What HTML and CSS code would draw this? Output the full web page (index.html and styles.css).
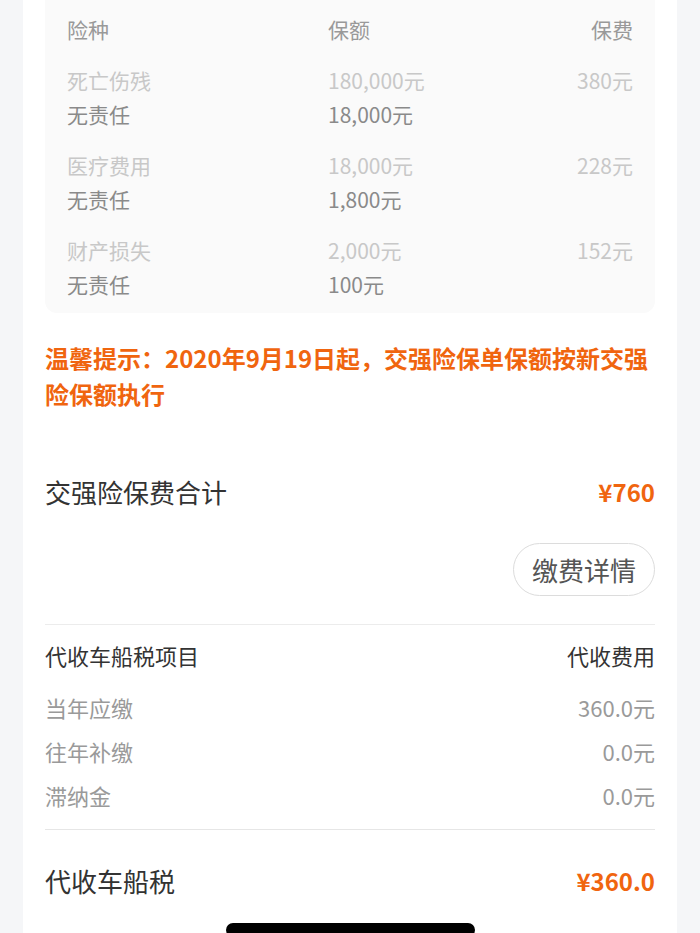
FILE: index.html
```html
<!DOCTYPE html>
<html lang="zh-CN">
<head>
<meta charset="utf-8">
<title>交强险保费</title>
<link rel="stylesheet" href="styles.css">
</head>
<body>
<div class="card">
  <div class="cover">
    <div class="cover-head">
      <span>险种</span><span>保额</span><span class="r">保费</span>
    </div>
    <div class="cover-row">
      <span class="lt">死亡伤残</span><span class="lt">180,000元</span><span class="lt r">380元</span>
      <span class="dk">无责任</span><span class="dk">18,000元</span><span></span>
    </div>
    <div class="cover-row">
      <span class="lt">医疗费用</span><span class="lt">18,000元</span><span class="lt r">228元</span>
      <span class="dk">无责任</span><span class="dk">1,800元</span><span></span>
    </div>
    <div class="cover-row">
      <span class="lt">财产损失</span><span class="lt">2,000元</span><span class="lt r">152元</span>
      <span class="dk">无责任</span><span class="dk">100元</span><span></span>
    </div>
  </div>

  <p class="notice">温馨提示：2020年9月19日起，交强险保单保额按新交强险保额执行</p>

  <div class="total">
    <span class="total-label">交强险保费合计</span>
    <span class="price">¥760</span>
  </div>

  <div class="btn-row">
    <button class="detail-btn">缴费详情</button>
  </div>

  <div class="divider first"></div>

  <div class="tax-head">
    <span>代收车船税项目</span><span>代收费用</span>
  </div>
  <div class="tax-list">
    <div class="tax-item"><span>当年应缴</span><span>360.0元</span></div>
    <div class="tax-item"><span>往年补缴</span><span>0.0元</span></div>
    <div class="tax-item"><span>滞纳金</span><span>0.0元</span></div>
  </div>

  <div class="divider"></div>

  <div class="total tax-total">
    <span class="total-label">代收车船税</span>
    <span class="price">¥360.0</span>
  </div>
</div>
<div class="home-indicator"></div>
</body>
</html>
```

FILE: styles.css
```css
* { box-sizing: border-box; }

html, body {
  margin: 0;
  padding: 0;
}

body {
  background: #f5f6f8;
  font-family: "Noto Sans CJK SC", "Noto Sans", sans-serif;
  color: #333;
  height: 933px;
  overflow: hidden;
}

.card {
  margin: 0 23px;
  background: #fff;
  padding: 0 22px 40px;
  min-height: 933px;
}

.cover {
  background: #fafafa;
  border-radius: 0 0 12px 12px;
  padding: 12px 22px 12px;
  display: flex;
  flex-direction: column;
  gap: 17px;
  font-size: 21px;
}

.cover-head,
.cover-row {
  display: grid;
  grid-template-columns: 261px 1fr auto;
  line-height: 34px;
}

.cover-head { color: #999; }

.cover .r { text-align: right; }

.cover .lt { color: #c8c8c8; }
.cover .dk { color: #8a8a8a; }

.notice {
  margin: 27px 0 0;
  color: #f0650f;
  font-weight: bold;
  font-size: 24px;
  line-height: 36px;
}

.total {
  margin-top: 60px;
  display: flex;
  justify-content: space-between;
  align-items: center;
  line-height: 40px;
}

.total-label {
  font-size: 26px;
  color: #333;
}

.price {
  font-size: 24px;
  font-weight: bold;
  color: #f0650f;
}

.btn-row {
  display: flex;
  justify-content: flex-end;
  margin-top: 31px;
}

.detail-btn {
  font-family: inherit;
  font-size: 26px;
  color: #555;
  background: #fff;
  border: 1px solid #dcdcdc;
  border-radius: 27px;
  height: 53px;
  padding: 0 18px;
  line-height: 51px;
}

.divider {
  height: 1px;
  background: #e6e6e6;
  margin-top: 12px;
}

.divider.first {
  margin-top: 28px;
  background: #ececec;
}

.tax-head {
  margin-top: 12px;
  display: flex;
  justify-content: space-between;
  font-size: 22px;
  line-height: 36px;
  color: #333;
}

.tax-list {
  margin-top: 12px;
  display: flex;
  flex-direction: column;
}

.tax-item {
  display: flex;
  justify-content: space-between;
  font-size: 22px;
  line-height: 44px;
  color: #9a9a9a;
}

.tax-total {
  margin-top: 31px;
}

.home-indicator {
  position: fixed;
  left: 226px;
  width: 249px;
  top: 923px;
  height: 14px;
  background: #000;
  border-radius: 7px;
}
```
